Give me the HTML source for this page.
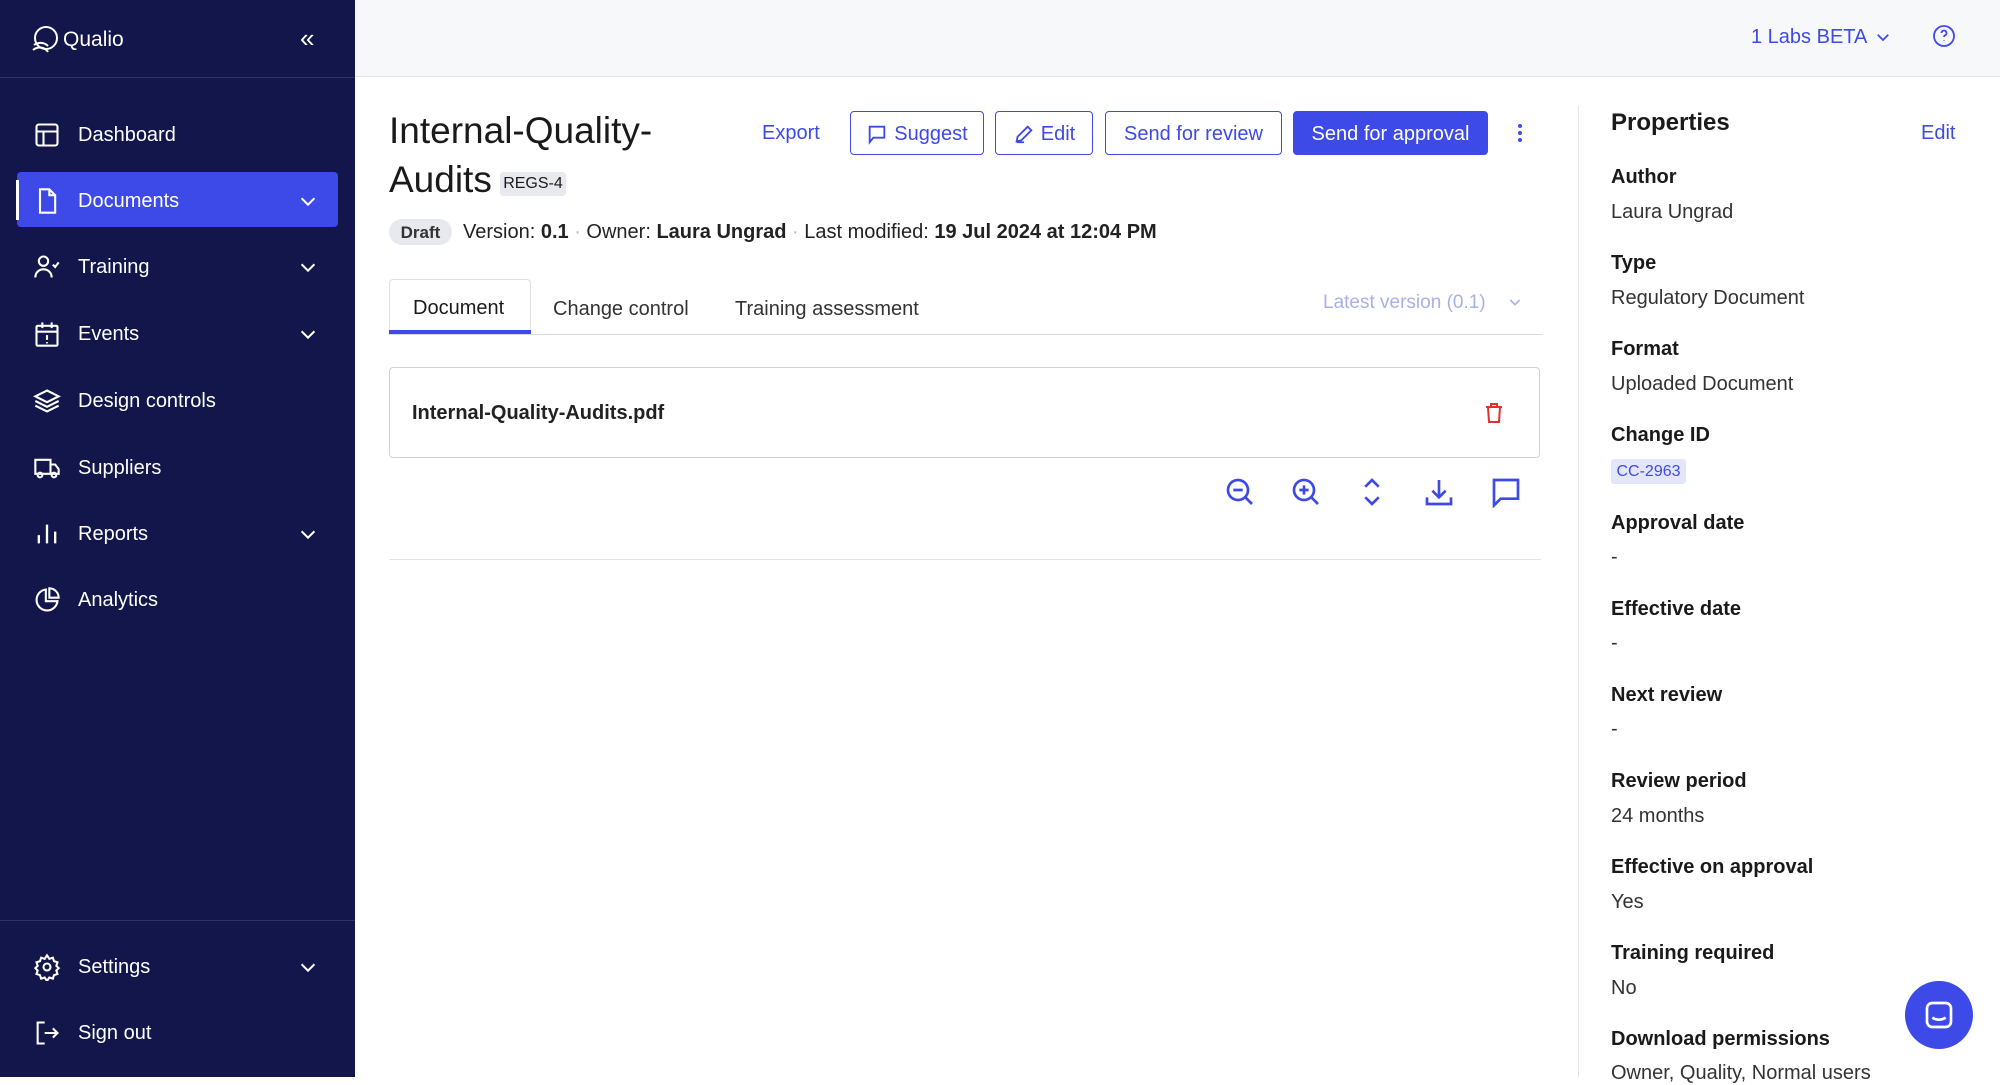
<!DOCTYPE html>
<html><head><meta charset="utf-8"><style>
*{box-sizing:border-box;margin:0;padding:0}
body{width:2000px;height:1077px;overflow:hidden;font-family:"Liberation Sans",sans-serif;background:#fff;position:relative;color:#1a1a1a}
.abs{position:absolute}
.sb{left:0;top:0;width:355px;height:1077px;background:#12164a;color:#fff}
.nav{position:absolute;left:0;width:355px;height:50px;display:flex;align-items:center;font-size:20px}
.nav svg.i{position:absolute;left:33px;width:28px;height:28px}
.nav span{position:absolute;left:78px}
.nav svg.c{position:absolute;left:297px;width:22px;height:22px}
.top{left:355px;top:0;width:1645px;height:77px;background:#f7f8fa;border-bottom:1px solid #e2e4ea}
.btn{position:absolute;top:111px;height:44px;border:1.5px solid #3d4ae8;border-radius:4px;color:#3d4ae8;font-size:20px;display:flex;align-items:center;justify-content:center;gap:6px;background:#fff;padding-top:2px}
.lbl{position:absolute;left:1611px;font-size:20px;font-weight:bold;color:#1a1a1a}
.val{position:absolute;left:1611px;font-size:20px;color:#333}
.ti{position:absolute;top:476px;width:32px;height:32px}
</style></head><body>
<div class="abs sb">
  <svg class="abs" style="left:30px;top:25px" width="30" height="30" viewBox="0 0 30 30" fill="none" stroke="#fff" stroke-width="2"><circle cx="16" cy="13" r="11"/><path d="M4 20c4-3 10-3 14 1M3 25c5-4 12-3 15 2"/></svg>
  <div class="abs" style="left:63px;top:28px;font-size:21px">Qualio</div>
  <div class="abs" style="left:300px;top:23px;font-size:26px">«</div>
  <div class="abs" style="left:0;top:77px;width:355px;height:1px;background:#2e3366"></div>
  <div class="nav" style="top:110px"><svg class="i" viewBox="0 0 24 24" fill="none" stroke="#fff" stroke-width="1.8"><rect x="3" y="3" width="18" height="18" rx="2"/><path d="M3 9h18M9 9v12"/></svg><span>Dashboard</span></div>
  <div class="abs" style="left:17px;top:172px;width:321px;height:55px;background:#3d4ae8;border-radius:4px"></div>
  <div class="abs" style="left:16px;top:180px;width:3px;height:40px;background:#fff"></div>
  <div class="nav" style="top:176px"><svg class="i" viewBox="0 0 24 24" fill="none" stroke="#fff" stroke-width="1.8"><path d="M6 2h8l5 5v15H6z M14 2v5h5"/></svg><span>Documents</span><svg class="c" viewBox="0 0 24 24" fill="none" stroke="#fff" stroke-width="2.2"><path d="M5 9l7 7 7-7"/></svg></div>
  <div class="nav" style="top:242px"><svg class="i" viewBox="0 0 24 24" fill="none" stroke="#fff" stroke-width="1.8"><circle cx="9" cy="7" r="4"/><path d="M2 21c0-4 3-7 7-7s7 3 7 7M17 10l2 2 3-4"/></svg><span>Training</span><svg class="c" viewBox="0 0 24 24" fill="none" stroke="#fff" stroke-width="2.2"><path d="M5 9l7 7 7-7"/></svg></div>
  <div class="nav" style="top:309px"><svg class="i" viewBox="0 0 24 24" fill="none" stroke="#fff" stroke-width="1.8"><rect x="3" y="5" width="18" height="17" rx="1"/><path d="M3 10h18M8 2v5M16 2v5M12 13v4M12 19v1"/></svg><span>Events</span><svg class="c" viewBox="0 0 24 24" fill="none" stroke="#fff" stroke-width="2.2"><path d="M5 9l7 7 7-7"/></svg></div>
  <div class="nav" style="top:376px"><svg class="i" viewBox="0 0 24 24" fill="none" stroke="#fff" stroke-width="1.8"><path d="M12 3l10 5-10 5-10-5z M2 12l10 5 10-5 M2 16l10 5 10-5"/></svg><span>Design controls</span></div>
  <div class="nav" style="top:443px"><svg class="i" viewBox="0 0 24 24" fill="none" stroke="#fff" stroke-width="1.8"><path d="M2 5h13v12H2z M15 9h4l3 4v4h-7"/><circle cx="6" cy="18" r="2"/><circle cx="18" cy="18" r="2"/></svg><span>Suppliers</span></div>
  <div class="nav" style="top:509px"><svg class="i" viewBox="0 0 24 24" fill="none" stroke="#fff" stroke-width="2"><path d="M5 20v-7M12 20V4M19 20v-10"/></svg><span>Reports</span><svg class="c" viewBox="0 0 24 24" fill="none" stroke="#fff" stroke-width="2.2"><path d="M5 9l7 7 7-7"/></svg></div>
  <div class="nav" style="top:575px"><svg class="i" viewBox="0 0 24 24" fill="none" stroke="#fff" stroke-width="1.8"><path d="M21 13A9 9 0 1 1 11 3v10z M14 2a8 8 0 0 1 8 8h-8z"/></svg><span>Analytics</span></div>
  <div class="abs" style="left:0;top:920px;width:355px;height:1px;background:#2e3366"></div>
  <div class="nav" style="top:942px"><svg class="i" viewBox="0 0 24 24" fill="none" stroke="#fff" stroke-width="1.8"><circle cx="12" cy="12" r="3"/><path d="M12 2l2 3 3-1 1 3 3 1-1 3 2 2-2 2 1 3-3 1-1 3-3-1-2 3-2-3-3 1-1-3-3-1 1-3-2-2 2-2-1-3 3-1 1-3 3 1z"/></svg><span>Settings</span><svg class="c" viewBox="0 0 24 24" fill="none" stroke="#fff" stroke-width="2.2"><path d="M5 9l7 7 7-7"/></svg></div>
  <div class="nav" style="top:1008px"><svg class="i" viewBox="0 0 24 24" fill="none" stroke="#fff" stroke-width="1.8"><path d="M10 3H4v18h6M10 12h11M17 8l4 4-4 4"/></svg><span>Sign out</span></div>
</div>
<div class="abs top"></div>
<div class="abs" style="left:1751px;top:26px;font-size:20px;color:#3d4ae8">1 Labs BETA</div>
<svg class="abs" style="left:1874px;top:28px" width="18" height="18" viewBox="0 0 24 24" fill="none" stroke="#3d4ae8" stroke-width="2.4"><path d="M5 9l7 7 7-7"/></svg>
<svg class="abs" style="left:1932px;top:24px" width="24" height="24" viewBox="0 0 24 24" fill="none" stroke="#3d4ae8" stroke-width="1.8"><circle cx="12" cy="12" r="10"/><path d="M9.5 9a2.5 2.5 0 1 1 3.5 2.3c-.7.4-1 1-1 1.7M12 16.5v.5"/></svg>

<div class="abs" style="left:389px;top:110px;font-size:37px;color:#1a1a1a">Internal-Quality-</div>
<div class="abs" style="left:389px;top:159px;font-size:37px;color:#1a1a1a">Audits</div>
<div class="abs" style="left:500px;top:172px;width:66px;height:24px;background:#e8e9ee;border-radius:3px;font-size:16px;text-align:center;line-height:24px">REGS-4</div>
<div class="abs" style="left:389px;top:219px;width:63px;height:26px;background:#e8e9ee;border-radius:13px;font-size:17px;text-align:center;line-height:27px;font-weight:bold;color:#333">Draft</div>
<div class="abs" style="left:463px;top:221px;font-size:20px;color:#222;white-space:nowrap">Version: <b>0.1</b> <span style="color:#bbb">·</span> Owner: <b>Laura Ungrad</b> <span style="color:#bbb">·</span> Last modified: <b>19 Jul 2024 at 12:04 PM</b></div>

<div class="abs" style="left:762px;top:122px;font-size:20px;color:#3d4ae8">Export</div>
<div class="btn" style="left:850px;width:134px"><svg width="22" height="22" viewBox="0 0 24 24" fill="none" stroke="#3d4ae8" stroke-width="2"><path d="M4 4h16v12H8l-4 5z"/></svg>Suggest</div>
<div class="btn" style="left:995px;width:98px"><svg width="22" height="22" viewBox="0 0 24 24" fill="none" stroke="#3d4ae8" stroke-width="2"><path d="M4 20l1-5L16 4l4 4L9 19zM4 21h8"/></svg>Edit</div>
<div class="btn" style="left:1105px;width:177px">Send for review</div>
<div class="btn" style="left:1293px;width:195px;background:#3d4ae8;color:#fff">Send for approval</div>
<svg class="abs" style="left:1512px;top:122px" width="16" height="22" viewBox="0 0 16 22" fill="#3d4ae8"><circle cx="8" cy="4" r="2"/><circle cx="8" cy="11" r="2"/><circle cx="8" cy="18" r="2"/></svg>

<div class="abs" style="left:389px;top:279px;width:142px;height:55px;border:1px solid #dde0e6;border-bottom:none;border-radius:4px 4px 0 0;background:#fff"></div>
<div class="abs" style="left:389px;top:330px;width:142px;height:4px;background:#3d4ae8"></div>
<div class="abs" style="left:413px;top:297px;font-size:20px">Document</div>
<div class="abs" style="left:553px;top:298px;font-size:20px;color:#333">Change control</div>
<div class="abs" style="left:735px;top:298px;font-size:20px;color:#333">Training assessment</div>
<div class="abs" style="left:1323px;top:292px;font-size:19px;color:#a8b0e8">Latest version (0.1)</div>
<svg class="abs" style="left:1507px;top:294px" width="16" height="16" viewBox="0 0 24 24" fill="none" stroke="#a8b0e8" stroke-width="2.4"><path d="M5 9l7 7 7-7"/></svg>
<div class="abs" style="left:389px;top:334px;width:1154px;height:1px;background:#d8dbe2"></div>

<div class="abs" style="left:389px;top:367px;width:1151px;height:91px;border:1.5px solid #d0d3da;border-radius:4px"></div>
<div class="abs" style="left:412px;top:402px;font-size:20px;font-weight:bold;color:#222">Internal-Quality-Audits.pdf</div>
<svg class="abs" style="left:1482px;top:401px" width="24" height="24" viewBox="0 0 24 24" fill="none" stroke="#e03030" stroke-width="2"><path d="M4 6h16M9 6V3h6v3M6 6l1 15h10l1-15"/></svg>

<svg class="ti" style="left:1224px" viewBox="0 0 24 24" fill="none" stroke="#3d4ae8" stroke-width="2"><circle cx="10.5" cy="10.5" r="7.5"/><path d="M16 16l5 5M7 10.5h7"/></svg>
<svg class="ti" style="left:1290px" viewBox="0 0 24 24" fill="none" stroke="#3d4ae8" stroke-width="2"><circle cx="10.5" cy="10.5" r="7.5"/><path d="M16 16l5 5M7 10.5h7M10.5 7v7"/></svg>
<svg class="ti" style="left:1356px" viewBox="0 0 24 24" fill="none" stroke="#3d4ae8" stroke-width="2"><path d="M7 8l5-5 5 5M7 16l5 5 5-5"/></svg>
<svg class="ti" style="left:1423px" viewBox="0 0 24 24" fill="none" stroke="#3d4ae8" stroke-width="2"><path d="M12 3v13M7 11l5 5 5-5M3 16v5h18v-5"/></svg>
<svg class="ti" style="left:1490px" viewBox="0 0 24 24" fill="none" stroke="#3d4ae8" stroke-width="2"><path d="M3 3h18v14H8l-5 5z"/></svg>
<div class="abs" style="left:389px;top:559px;width:1152px;height:1px;background:#e2e4ea"></div>

<div class="abs" style="left:1578px;top:106px;width:1px;height:971px;background:#e2e4ea"></div>
<div class="abs" style="left:1611px;top:109px;font-size:24px;font-weight:bold;color:#1a1a1a">Properties</div>
<div class="abs" style="left:1921px;top:122px;font-size:20px;color:#3d4ae8">Edit</div>
<div class="lbl" style="top:166px">Author</div><div class="val" style="top:201px">Laura Ungrad</div>
<div class="lbl" style="top:252px">Type</div><div class="val" style="top:287px">Regulatory Document</div>
<div class="lbl" style="top:338px">Format</div><div class="val" style="top:373px">Uploaded Document</div>
<div class="lbl" style="top:424px">Change ID</div>
<div class="abs" style="left:1611px;top:459px;width:75px;height:25px;background:#e4e7fb;border-radius:3px;color:#3d4ae8;font-size:16px;text-align:center;line-height:26px">CC-2963</div>
<div class="lbl" style="top:512px">Approval date</div><div class="val" style="top:546px">-</div>
<div class="lbl" style="top:598px">Effective date</div><div class="val" style="top:632px">-</div>
<div class="lbl" style="top:684px">Next review</div><div class="val" style="top:718px">-</div>
<div class="lbl" style="top:770px">Review period</div><div class="val" style="top:805px">24 months</div>
<div class="lbl" style="top:856px">Effective on approval</div><div class="val" style="top:891px">Yes</div>
<div class="lbl" style="top:942px">Training required</div><div class="val" style="top:977px">No</div>
<div class="lbl" style="top:1028px">Download permissions</div><div class="val" style="top:1062px">Owner, Quality, Normal users</div>
<div class="abs" style="left:1905px;top:981px;width:68px;height:68px;border-radius:50%;background:#3d4ae8"></div>
<svg class="abs" style="left:1923px;top:999px" width="32" height="32" viewBox="0 0 24 24" fill="none" stroke="#fff" stroke-width="2"><rect x="3" y="3" width="18" height="18" rx="4"/><path d="M7 14c3 2 7 2 10 0"/></svg>
</body></html>
